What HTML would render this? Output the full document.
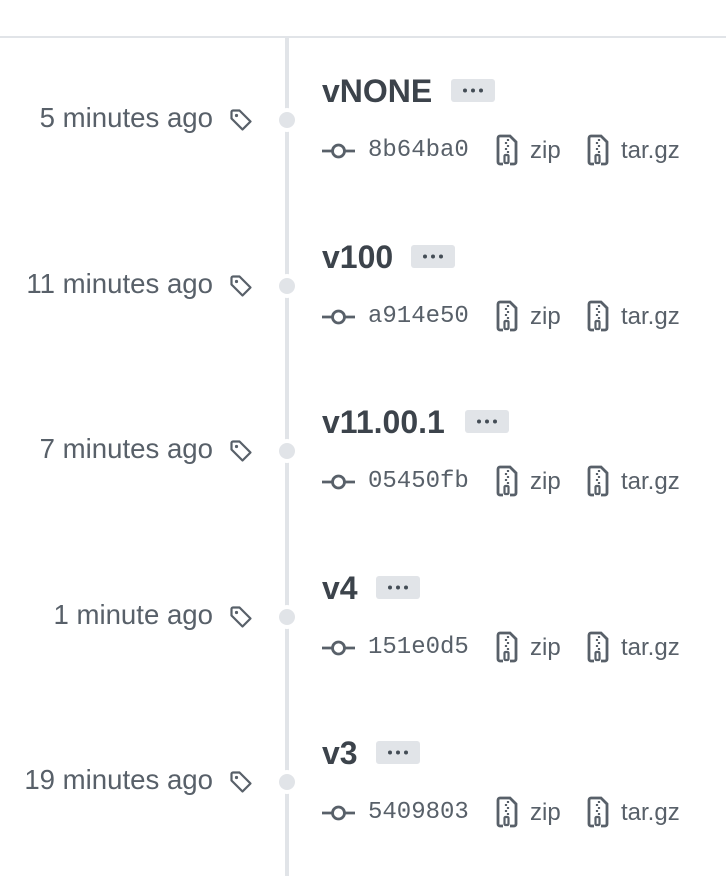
<!DOCTYPE html>
<html><head><style>
body{margin:0;width:726px;height:876px;background:#fff;position:relative;overflow:hidden;font-family:"Liberation Sans",sans-serif;color:#444d56}
.top{position:absolute;left:0;top:36px;width:726px;height:2px;background:#e1e4e8}
.vl{position:absolute;left:285px;top:37px;width:4px;height:839px;background:#e1e4e8}
.dot{position:absolute;left:279px;width:16px;height:16px;border-radius:50%;background:#e1e4e8;box-shadow:0 0 0 4px #fff}
.date{position:absolute;right:513px;font-size:27.6px;color:#586069;line-height:30px;white-space:nowrap}
.tag{position:absolute;left:229px}
.title{position:absolute;left:322px;font-size:32px;font-weight:bold;color:#3c434b;line-height:36px;white-space:nowrap}
.btn{display:inline-block;width:44px;height:23px;background:#e1e4e8;border-radius:3px}
.btn svg{position:absolute;left:11px;top:9px}
.meta{position:absolute;left:322px;height:34px;font-size:24px;color:#586069;white-space:nowrap}
.meta>*{position:absolute;top:0}
.mono{font-family:"Liberation Mono",monospace;font-size:24px;line-height:34px}
.t{line-height:34px}
</style></head><body>
<div class="top"></div><div class="vl"></div>
<script>
var rows=[["5 minutes ago","vNONE","8b64ba0",0,451],["11 minutes ago","v100","a914e50",166,411],["7 minutes ago","v11.00.1","05450fb",331,465],["1 minute ago","v4","151e0d5",497,376],["19 minutes ago","v3","5409803",662,376]];
var zipIcon='<svg width="22" height="32" viewBox="0 0 22 32" fill="none" stroke="#586069" stroke-width="2.8"><path d="M8 2H4a2 2 0 0 0-2 2v24a2 2 0 0 0 2 2h3M14 30h4a2 2 0 0 0 2-2V8l-6-6H8"/><path d="M12 5v2M10 8v2M12 11v2M10 14v2M12 17v2" stroke-width="2.2"/><rect x="8.5" y="21" width="4" height="8" rx="1" stroke-width="2.2"/></svg>';
var h='';
rows.forEach(function(r){var o=r[3];
h+='<div class="dot" style="top:'+(112+o)+'px"></div>';
h+='<div class="date" style="top:'+(103+o)+'px">'+r[0]+'</div>';
h+='<svg class="tag" style="top:'+(108+o)+'px" width="24" height="24" viewBox="0 0 24 24" fill="none" stroke="#586069" stroke-width="2.2" stroke-linejoin="round"><path d="M2.5 4v6.5l11 11 8-8-11-11H4A1.5 1.5 0 0 0 2.5 4z"/><circle cx="7.5" cy="7.5" r="1.6" fill="#586069" stroke="none"/></svg>';
h+='<div class="title" style="top:'+(73+o)+'px">'+r[1]+'<span class="btn" style="position:absolute;left:'+(r[4]-322)+'px;top:6px;margin:0"><svg width="22" height="5"><circle cx="3" cy="2.5" r="2" fill="#444d56"/><circle cx="11" cy="2.5" r="2" fill="#444d56"/><circle cx="19" cy="2.5" r="2" fill="#444d56"/></svg></span></div>';
h+='<div class="meta" style="top:'+(134+o)+'px">'+
'<svg style="left:0;top:7px" width="33" height="20" viewBox="0 0 33 20" fill="none" stroke="#586069" stroke-width="2.8"><circle cx="16.5" cy="10" r="6"/><path d="M0 10h10.5M22.5 10H33"/></svg>'+
'<span class="mono" style="left:46px">'+r[2]+'</span>'+
'<span style="left:174px;top:0px">'+zipIcon+'</span><span class="t" style="left:208px">zip</span>'+
'<span style="left:265px;top:0px">'+zipIcon+'</span><span class="t" style="left:299px">tar.gz</span></div>';
});
document.write(h);
</script>
</body></html>
